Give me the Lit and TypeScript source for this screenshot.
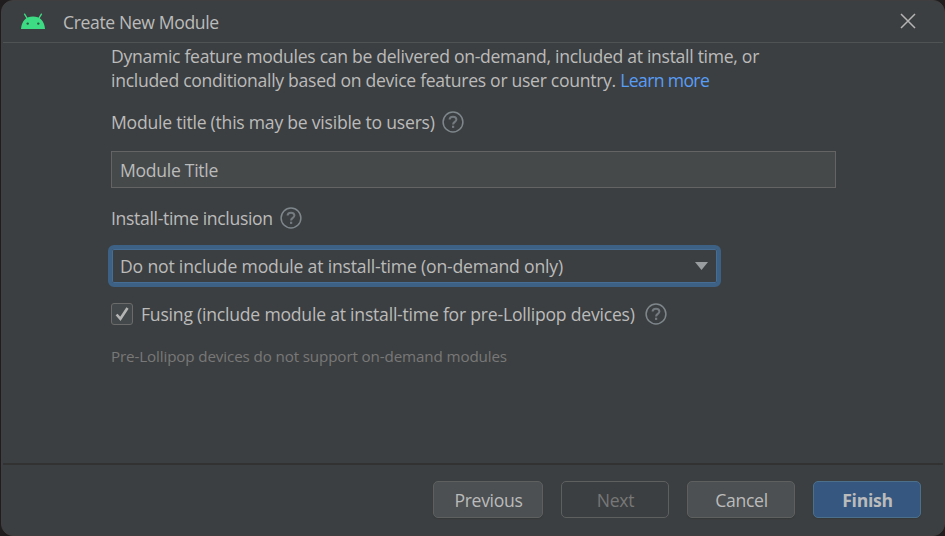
import { LitElement, html, css, svg } from "lit";
import { customElement } from "lit/decorators.js";

const helpIcon = html`<svg class="help" width="22" height="22" viewBox="0 0 22 22" fill="none">
  ${svg`<circle cx="11" cy="11" r="9.9" stroke="#7e878c" stroke-width="1.5"/>
  <path d="M7.6 8.6C7.6 6.8 9 5.7 11 5.7s3.4 1.1 3.4 2.8c0 2.3-3.3 2.5-3.3 4.9" stroke="#747b80" stroke-width="2"/>
  <rect x="10" y="14.7" width="2.2" height="2.2" fill="#747b80"/>`}
</svg>`;

@customElement("app-root")
export class AppRoot extends LitElement {
  static styles = css`
    :host { display: block; width: 945px; height: 536px; background: #1f1d1d; overflow: hidden; }
    * { box-sizing: border-box; }
    .dialog {
      display: flex; flex-direction: column; width: 944px; height: 536px; margin-left: 1px;
      background: #3c3f41; border: 1px solid #403e3e; border-radius: 12px;
      font: 17.6px/24px "Open Sans", "Noto Sans", sans-serif; letter-spacing: -0.3px; color: #bbbbbb; white-space: nowrap;
    }
    .titlebar { display: flex; align-items: center; height: 42px; margin: 0 1px; border-bottom: 1px solid #505354; padding: 0 27px 0 17px; }
    .robot { margin: 0 17px 2px 0; }
    .close { margin-bottom: 2px; }
    .title { flex: 1; letter-spacing: -0.38px; }
    .content { flex: 1; padding: 1px 0 0 109px; }
    .row { display: flex; align-items: center; height: 24px; }
    .intro { height: 48px; }
    .help { margin-left: 7px; flex: none; }
    .link { color: #589df6; letter-spacing: -0.64px; }
    .label1 { margin-top: 18px; }
    .field { display: flex; align-items: center; width: 725px; height: 37px; margin-top: 17px; padding-left: 8px; background: #45494a; border: 1px solid #646464; }
    .label2 { margin-top: 18px; }
    .select { display: flex; align-items: center; justify-content: space-between; width: 613px; height: 42px; margin: 15px 0 0 -3px; padding: 0 9px 0 8px; border: 4px solid #3d6185; border-radius: 6px; box-shadow: inset 0 0 0 1px #466d94; }
    .check { margin-top: 15px; }
    .box { width: 22px; height: 22px; margin-right: 8px; background: #43494a; border: 1px solid #6b6b6b; border-radius: 3px; }
    .hint { margin-top: 18px; font-size: 15.2px; color: #787878; }
    .t1 { letter-spacing: -0.3px; }
    .t2 { letter-spacing: -0.3px; }
    .t3 { letter-spacing: -0.24px; }
    .t5 { letter-spacing: -0.34px; }
    .t6 { letter-spacing: -0.18px; }
    .t7 { letter-spacing: -0.22px; }
    .t7 + .help { margin-left: 10px; }
    .t8 { letter-spacing: -0.13px; }
    .footer { display: flex; justify-content: flex-end; gap: 18px; height: 72px; margin: 0 1px; border-top: 2px solid #323232; padding: 16px 22px 0 0; }
    .btn { display: flex; align-items: center; justify-content: center; width: 108px; height: 37px; padding: 1px 0 0 1px; border: 1px solid #5e6060; border-radius: 5px; background: #4c5052; box-shadow: 0 1px 1px #36393a; }
    .previous { width: 110px; }
    .disabled { background: none; color: #777777; box-shadow: none; }
    .primary { background: #365880; border-color: #4c708c; font-weight: 700; }
  `;

  render() {
    return html`<div class="dialog">
      <div class="titlebar">
        <svg class="robot" width="26" height="18" viewBox="0 0 26 18">
          <path d="M1 17C1.6 9 6 4.5 13 4.5S24.4 9 25 17Z" fill="#3ddc84"/>
          <path d="M4.6 2.2 7.5 7M21.4 2.2 18.5 7" stroke="#3ddc84" stroke-width="1.4" stroke-linecap="round"/>
          <circle cx="7.7" cy="11.6" r="1.2" fill="#2c5841"/><circle cx="18.3" cy="11.6" r="1.2" fill="#2c5841"/>
        </svg>
        <span class="title">Create New Module</span>
        <svg class="close" width="16" height="16" viewBox="0 0 16 16"><path d="M1 1 15 15M15 1 1 15" stroke="#b4b4b4" stroke-width="1.5"/></svg>
      </div>
      <div class="content">
        <div class="intro">
          <div class="row"><span class="t1">Dynamic feature modules can be delivered on-demand, included at install time, or</span></div>
          <div class="row"><span class="t2">included conditionally based on device features or user country.&nbsp;</span><span class="link">Learn more</span></div>
        </div>
        <div class="row label1"><span class="t3">Module title (this may be visible to users)</span>${helpIcon}</div>
        <div class="field"><span class="t4">Module Title</span></div>
        <div class="row label2"><span class="t5">Install-time inclusion</span>${helpIcon}</div>
        <div class="select">
          <span class="t6">Do not include module at install-time (on-demand only)</span>
          <svg width="13" height="8" viewBox="0 0 13 8"><path d="M0 0H13L6.5 8Z" fill="#9a9da0"/></svg>
        </div>
        <div class="row check">
          <svg class="box" viewBox="0 0 20 20"><path d="M4.6 10.5 8.4 14.8 15.5 4" fill="none" stroke="#b4b4b4" stroke-width="2.6"/></svg>
          <span class="t7">Fusing (include module at install-time for pre-Lollipop devices)</span>${helpIcon}
        </div>
        <div class="row hint"><span class="t8">Pre-Lollipop devices do not support on-demand modules</span></div>
      </div>
      <div class="footer">
        <div class="btn previous">Previous</div>
        <div class="btn disabled">Next</div>
        <div class="btn">Cancel</div>
        <div class="btn primary">Finish</div>
      </div>
    </div>`;
  }
}
